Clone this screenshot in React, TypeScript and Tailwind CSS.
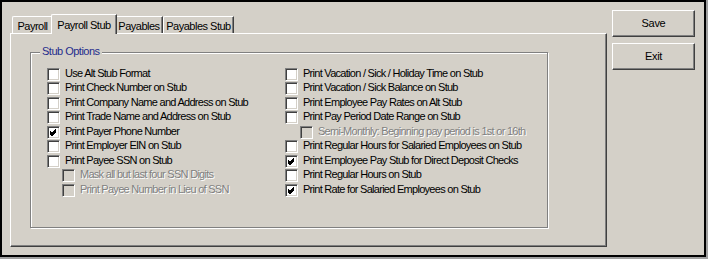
import React from "react";

type Item = { label: string; checked?: boolean; disabled?: boolean };

const left: Item[] = [
  { label: "Use Alt Stub Format" },
  { label: "Print Check Number on Stub" },
  { label: "Print Company Name and Address on Stub" },
  { label: "Print Trade Name and Address on Stub" },
  { label: "Print Payer Phone Number", checked: true },
  { label: "Print Employer EIN on Stub" },
  { label: "Print Payee SSN on Stub" },
  { label: "Mask all but last four SSN Digits", disabled: true },
  { label: "Print Payee Number in Lieu of SSN", disabled: true },
];

const right: Item[] = [
  { label: "Print Vacation / Sick / Holiday Time on Stub" },
  { label: "Print Vacation / Sick Balance on Stub" },
  { label: "Print Employee Pay Rates on Alt Stub" },
  { label: "Print Pay Period Date Range on Stub" },
  { label: "Semi-Monthly: Beginning pay period is 1st or 16th", disabled: true },
  { label: "Print Regular Hours for Salaried Employees on Stub" },
  { label: "Print Employee Pay Stub for Direct Deposit Checks", checked: true },
  { label: "Print Regular Hours on Stub" },
  { label: "Print Rate for Salaried Employees on Stub", checked: true },
];

function Check({ item }: { item: Item }) {
  return (
    <div className={`flex h-[14.5px] items-center ${item.disabled ? "pl-[15px]" : ""}`}>
      <div
        className={`relative h-[13px] w-[13px] shrink-0 border border-t-[#808080] border-l-[#808080] border-r-white border-b-white shadow-[inset_1px_1px_0_#404040,inset_-1px_-1px_0_#d4d0c8] ${
          item.disabled ? "bg-[#d4d0c8]" : "bg-white"
        }`}
      >
        {item.checked && (
          <svg className="absolute left-0 top-0" width="11" height="11" viewBox="0 0 11 11">
            <path d="M2 4.5 L4 6.5 L8 2.5 M2 5.5 L4 7.5 L8 3.5 M2 6.5 L4 8.5 L8 4.5" stroke="#000" strokeWidth="1" fill="none" shapeRendering="crispEdges" />
          </svg>
        )}
      </div>
      <span
        className={`relative top-[-1px] ml-[5px] whitespace-nowrap text-[11px] leading-none tracking-[-0.72px] ${
          item.disabled ? "text-[#808080] [text-shadow:1px_1px_0_#ffffff]" : "text-black"
        }`}
      >
        {item.label}
      </span>
    </div>
  );
}

function Tab({ label, selected, w }: { label: string; selected?: boolean; w: string }) {
  if (selected) {
    return (
      <div
        className={`relative z-10 -mx-[2px] mb-[-1px] flex h-[20px] ${w} items-start justify-center border-l border-t border-r border-l-white border-t-white border-r-[#404040] bg-[#d4d0c8] pt-[5px] shadow-[inset_-1px_0_0_#808080] rounded-tl-[2px]`}
      >
        <span className="text-[11px] leading-none tracking-[-0.5px] text-black">{label}</span>
      </div>
    );
  }
  return (
    <div
      className={`flex h-[17px] ${w} items-start justify-center border-l border-t border-r border-l-white border-t-white border-r-[#404040] bg-[#d4d0c8] pt-[4px] shadow-[inset_-1px_0_0_#808080] rounded-tl-[2px]`}
    >
      <span className="text-[11px] leading-none tracking-[-0.5px] text-black">{label}</span>
    </div>
  );
}

function Btn({ label }: { label: string }) {
  return (
    <div className="flex h-[27px] w-[83px] items-center justify-center border border-t-white border-l-white border-r-[#404040] border-b-[#404040] bg-[#d4d0c8] shadow-[inset_-1px_-1px_0_#808080]">
      <span className="text-[11px] leading-none tracking-[-0.3px] text-black">{label}</span>
    </div>
  );
}

export default function App() {
  return (
    <div className="h-[259px] w-[708px] bg-[#a0a0a0]" style={{ fontFamily: '"Liberation Sans", Arial, sans-serif' }}>
      <div className="flex h-[257px] w-[706px] border-2 border-black bg-[#d4d0c8]">
        <div className="ml-[8px] mt-[12px] flex flex-col">
          <div className="flex items-end pl-[2px]">
            <Tab label="Payroll" w="w-[41px]" />
            <Tab label="Payroll Stub" selected w="w-[66px]" />
            <Tab label="Payables" w="w-[48px]" />
            <Tab label="Payables Stub" w="w-[71px]" />
          </div>
          <div className="h-[214px] w-[597px] border border-t-white border-l-white border-r-[#404040] border-b-[#404040] shadow-[inset_-1px_-1px_0_#808080] pl-[19px] pt-[18px]">
            <div className="relative h-[176px] w-[518px] border border-[#808080] shadow-[1px_1px_0_#ffffff,inset_1px_1px_0_#ffffff]">
              <span className="absolute left-[9px] top-[-7px] bg-[#d4d0c8] px-[2px] text-[11px] leading-none tracking-[-0.5px] text-[#1f2c8c]">
                Stub Options
              </span>
              <div className="flex pl-[16px] pt-[14px]">
                <div className="flex w-[238px] flex-col">
                  {left.map((it) => (
                    <Check key={it.label} item={it} />
                  ))}
                </div>
                <div className="flex flex-col">
                  {right.map((it) => (
                    <Check key={it.label} item={it} />
                  ))}
                </div>
              </div>
            </div>
          </div>
        </div>
        <div className="ml-[5px] mt-[8px] flex flex-col gap-[6px]">
          <Btn label="Save" />
          <Btn label="Exit" />
        </div>
      </div>
    </div>
  );
}
